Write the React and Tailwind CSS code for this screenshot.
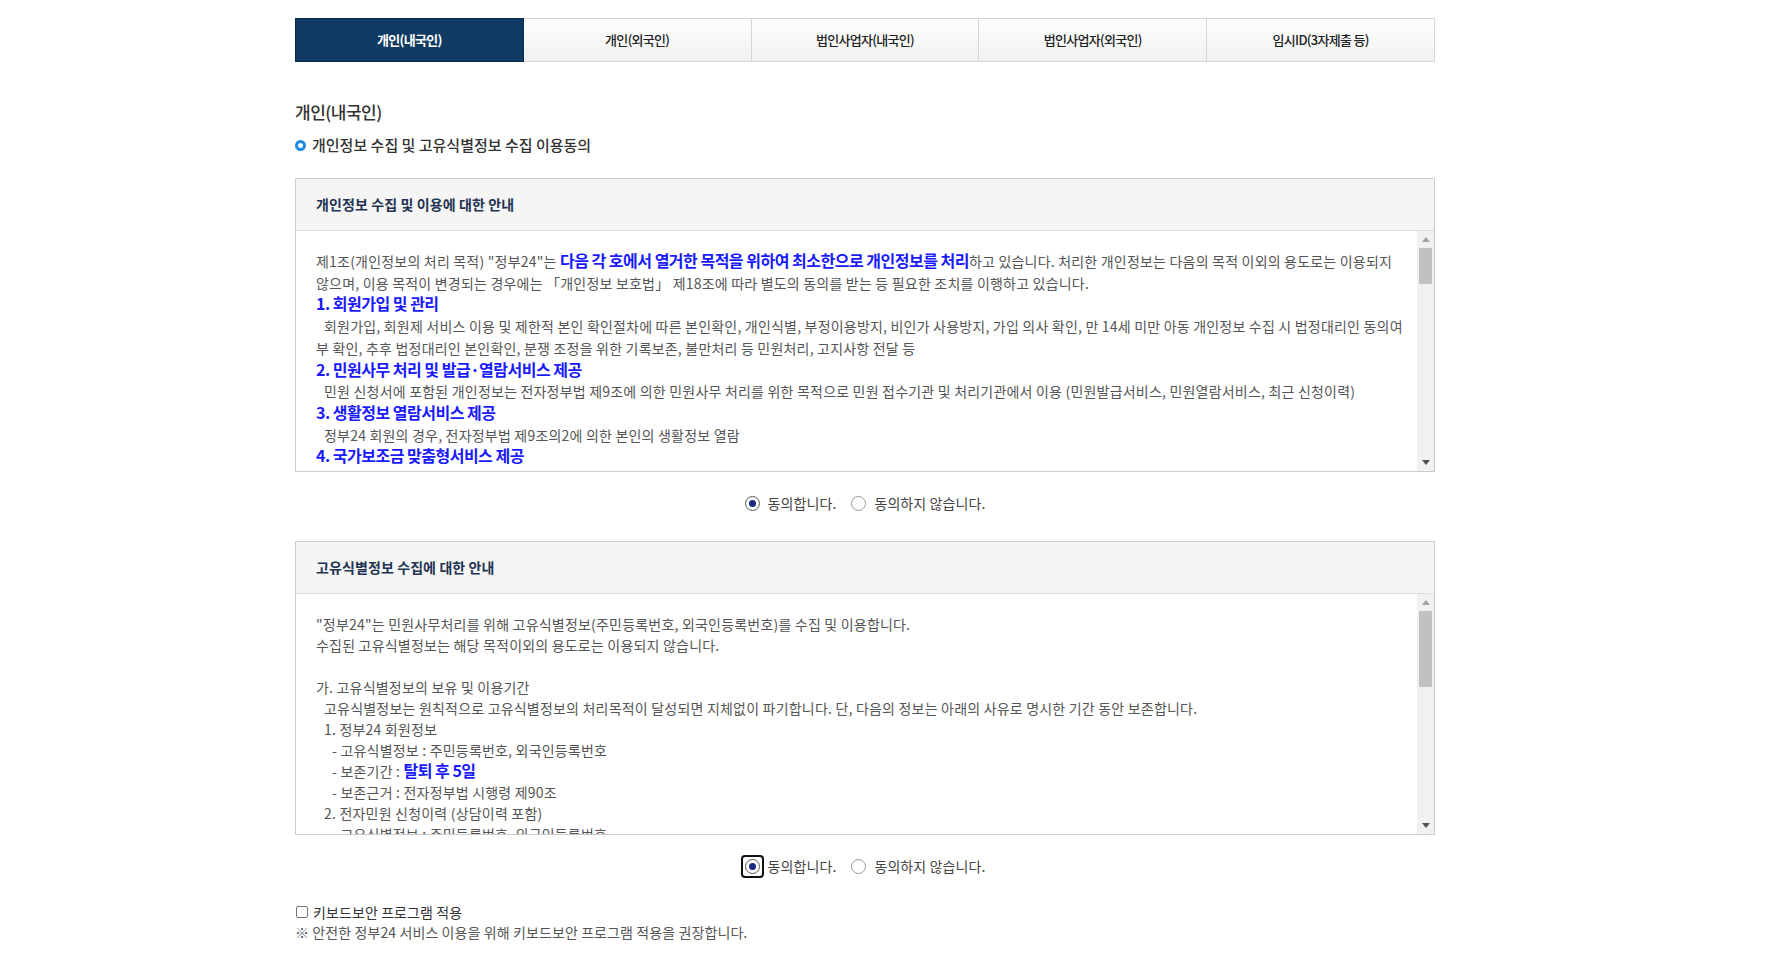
import React from "react";

const tabs = ["개인(내국인)", "개인(외국인)", "법인사업자(내국인)", "법인사업자(외국인)", "임시ID(3자제출 등)"];

function Arrow({ up }) {
  return (
    <svg width="8" height="5" viewBox="0 0 8 5" className="block">
      {up ? <polygon points="0,5 8,5 4,0" fill="#a3a3a3" /> : <polygon points="0,0 8,0 4,5" fill="#505050" />}
    </svg>
  );
}

function Scrollbar({ thumbClass }) {
  return (
    <div className="w-[17px] shrink-0 bg-[#f1f1f1] flex flex-col">
      <div className="h-[17px] flex items-center justify-center">
        <Arrow up />
      </div>
      <div className="flex-1 flex flex-col">
        <div className={thumbClass} />
      </div>
      <div className="h-[17px] flex items-center justify-center">
        <Arrow />
      </div>
    </div>
  );
}

function Radio({ checked, focused }) {
  const dot = (
    <span
      className={
        "w-[15px] h-[15px] rounded-full border bg-white flex items-center justify-center " +
        (checked ? "border-[#5a5a5a]" : "border-[#9a9a9a]")
      }
    >
      {checked && <span className="w-[7px] h-[7px] rounded-full bg-[#1b2a80]" />}
    </span>
  );
  if (focused) {
    return (
      <span className="w-[15px] h-[15px] relative flex items-center justify-center">
        {dot}
        <span className="absolute -left-[4px] -top-[4px] w-[23px] h-[23px] rounded-[4px] border-2 border-[#111]" />
      </span>
    );
  }
  return dot;
}

function RadioRow({ focused }) {
  return (
    <div className="mt-[21px] h-[20px] flex items-center justify-center text-[14px] text-[#444] tracking-[0.1px]">
      <label className="flex items-center">
        <Radio checked focused={focused} />
        <span className="ml-[8px]">동의합니다.</span>
      </label>
      <label className="flex items-center ml-[15px]">
        <Radio />
        <span className="ml-[8px]">동의하지 않습니다.</span>
      </label>
    </div>
  );
}

function Box({ title, children, thumbClass, leading }) {
  return (
    <div className="border border-[#cccccc] bg-white">
      <div className="h-[52px] bg-[#f5f5f5] border-b border-[#dddddd] flex items-center pl-[20px] text-[14px] font-bold text-[#1f3352] tracking-[0.1px]">
        {title}
      </div>
      <div className="h-[240px] flex">
        <div className={"flex-1 overflow-hidden pl-[20px] pr-[9px] pt-[20px] text-[14px] text-[#555] tracking-[0.2px] " + leading}>
          {children}
        </div>
        <Scrollbar thumbClass={thumbClass} />
      </div>
    </div>
  );
}

const Blue = ({ children }) => (
  <span className="text-[16px] leading-none font-bold text-[#1a1aff] tracking-[-0.5px]">{children}</span>
);
const Indent = () => <span className="inline-block w-[8px]" />;

export default function App() {
  return (
    <div className="min-h-screen bg-white font-['Noto_Sans_CJK_KR','Noto_Sans',sans-serif] text-[#333]">
      <div className="ml-[295px] w-[1140px] pt-[18px]">
        <div className="flex h-[44px]">
          {tabs.map((t, i) =>
            i === 0 ? (
              <div
                key={t}
                className="flex-1 flex items-center justify-center bg-[#0f3a62] border border-[#0a2b4a] text-white text-[13px] font-bold tracking-[-0.7px]"
              >
                {t}
              </div>
            ) : (
              <div
                key={t}
                className="flex-1 flex items-center justify-center bg-gradient-to-b from-white to-[#f1f1f1] border-y border-r border-[#d6d6d6] text-[#222] text-[13px] font-medium tracking-[-0.7px]"
              >
                {t}
              </div>
            )
          )}
        </div>

        <h2 className="mt-[38px] text-[17px] leading-[24px] text-[#333] font-medium tracking-[-0.5px]">개인(내국인)</h2>
        <div className="mt-[10px] flex items-center h-[22px] text-[15px] text-[#333] font-medium tracking-[0px]">
          <span className="w-[11px] h-[11px] rounded-full border-[3px] border-[#1b8ae4] mr-[6px]" />
          개인정보 수집 및 고유식별정보 수집 이용동의
        </div>

        <div className="mt-[22px]">
          <Box title="개인정보 수집 및 이용에 대한 안내" thumbClass="ml-[2px] w-[13px] h-[36px] bg-[#c1c1c1]" leading="leading-[21.7px]">
            <p>
              제1조(개인정보의 처리 목적) "정부24"는 <Blue>다음 각 호에서 열거한 목적을 위하여 최소한으로 개인정보를 처리</Blue>하고 있습니다. 처리한
              개인정보는 다음의 목적 이외의 용도로는 이용되지 않으며, 이용 목적이 변경되는 경우에는 「개인정보 보호법」 제18조에 따라 별도의 동의를 받는 등
              필요한 조치를 이행하고 있습니다.
            </p>
            <p>
              <Blue>1. 회원가입 및 관리</Blue>
            </p>
            <p>
              <Indent />
              회원가입, 회원제 서비스 이용 및 제한적 본인 확인절차에 따른 본인확인, 개인식별, 부정이용방지, 비인가 사용방지, 가입 의사 확인, 만 14세 미만 아동
              개인정보 수집 시 법정대리인 동의여부 확인, 추후 법정대리인 본인확인, 분쟁 조정을 위한 기록보존, 불만처리 등 민원처리, 고지사항 전달 등
            </p>
            <p>
              <Blue>2. 민원사무 처리 및 발급·열람서비스 제공</Blue>
            </p>
            <p>
              <Indent />
              민원 신청서에 포함된 개인정보는 전자정부법 제9조에 의한 민원사무 처리를 위한 목적으로 민원 접수기관 및 처리기관에서 이용 (민원발급서비스,
              민원열람서비스, 최근 신청이력)
            </p>
            <p>
              <Blue>3. 생활정보 열람서비스 제공</Blue>
            </p>
            <p>
              <Indent />
              정부24 회원의 경우, 전자정부법 제9조의2에 의한 본인의 생활정보 열람
            </p>
            <p>
              <Blue>4. 국가보조금 맞춤형서비스 제공</Blue>
            </p>
            <p>
              <Indent />
              정부24 회원의 경우, 국가보조금 맞춤형서비스 제공을 위한 개인정보 이용
            </p>
          </Box>
        </div>

        <RadioRow />

        <div className="mt-[28px]">
          <Box title="고유식별정보 수집에 대한 안내" thumbClass="ml-[2px] w-[13px] h-[76px] bg-[#c1c1c1]" leading="leading-[21px]">
            <p>"정부24"는 민원사무처리를 위해 고유식별정보(주민등록번호, 외국인등록번호)를 수집 및 이용합니다.</p>
            <p>수집된 고유식별정보는 해당 목적이외의 용도로는 이용되지 않습니다.</p>
            <p className="h-[21px]" />
            <p>가. 고유식별정보의 보유 및 이용기간</p>
            <p className="pl-[8px]">
              고유식별정보는 원칙적으로 고유식별정보의 처리목적이 달성되면 지체없이 파기합니다. 단, 다음의 정보는 아래의 사유로 명시한 기간 동안 보존합니다.
            </p>
            <p className="pl-[8px]">1. 정부24 회원정보</p>
            <p className="pl-[16px]">- 고유식별정보 : 주민등록번호, 외국인등록번호</p>
            <p className="pl-[16px]">
              - 보존기간 : <Blue>탈퇴 후 5일</Blue>
            </p>
            <p className="pl-[16px]">- 보존근거 : 전자정부법 시행령 제90조</p>
            <p className="pl-[8px]">2. 전자민원 신청이력 (상담이력 포함)</p>
            <p className="pl-[16px]">- 고유식별정보 : 주민등록번호, 외국인등록번호</p>
          </Box>
        </div>

        <RadioRow focused />

        <label className="mt-[26px] h-[20px] flex items-center text-[14px] text-[#333] tracking-[0.1px]">
          <span className="w-[12px] h-[12px] border border-[#767676] rounded-[2px] bg-white mr-[5px] ml-[1px]" />
          키보드보안 프로그램 적용
        </label>
        <p className="h-[20px] leading-[20px] text-[14px] text-[#555] tracking-[0.1px]">
          ※ 안전한 정부24 서비스 이용을 위해 키보드보안 프로그램 적용을 권장합니다.
        </p>
      </div>
    </div>
  );
}
